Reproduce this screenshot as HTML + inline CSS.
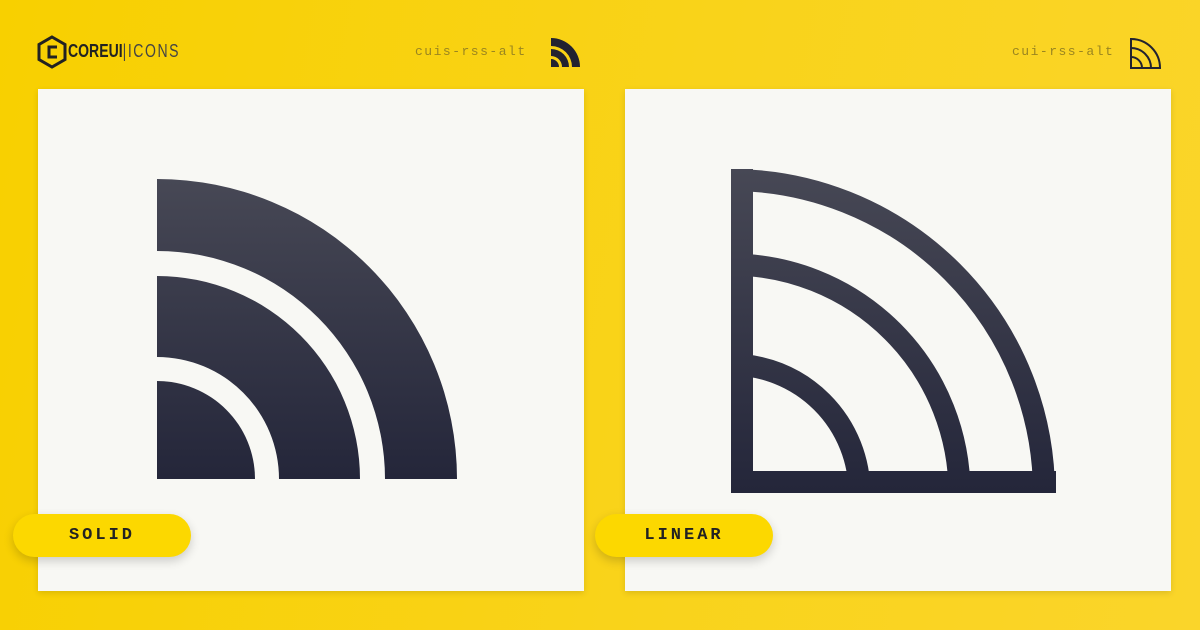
<!DOCTYPE html>
<html><head><meta charset="utf-8"><style>
body{margin:0;width:1200px;height:630px;overflow:hidden;background:linear-gradient(100deg,#f8d000 0%,#f9d31a 55%,#fad52a 100%);font-family:"Liberation Sans",sans-serif;position:relative}
.card{position:absolute;top:89px;width:546px;height:502px;background:#f8f8f4;box-shadow:0 2px 6px rgba(0,0,0,.12)}
.pill{position:absolute;top:514px;width:178px;height:43px;border-radius:22px;background:#fcd800;box-shadow:0 4px 10px rgba(0,0,0,.18);font-family:"Liberation Mono",monospace;font-weight:bold;font-size:17px;letter-spacing:3px;color:#222;display:flex;align-items:center;justify-content:center}
.lbl{position:absolute;top:44px;font-family:"Liberation Mono",monospace;font-size:13px;letter-spacing:1.5px;color:#9a8520}
svg{position:absolute;left:0;top:0}
</style></head><body>
<div class="card" style="left:38px"></div>
<div class="card" style="left:625px"></div>
<div class="lbl" style="left:415px">cuis-rss-alt</div>
<div class="lbl" style="left:1012px">cui-rss-alt</div>
<div style="position:absolute;left:68px;top:41px;font-size:18px;font-weight:bold;color:#222;transform:scaleX(0.78);transform-origin:0 0;white-space:nowrap">COREUI<span style="font-weight:normal;color:#444;letter-spacing:2px">|ICONS</span></div>
<svg width="1200" height="630">
<defs>
<linearGradient id="g" gradientUnits="userSpaceOnUse" x1="0" y1="179" x2="0" y2="479"><stop offset="0" stop-color="#474855"/><stop offset="1" stop-color="#24263a"/></linearGradient>
<linearGradient id="g2" gradientUnits="userSpaceOnUse" x1="0" y1="169" x2="0" y2="493"><stop offset="0" stop-color="#474855"/><stop offset="1" stop-color="#24263a"/></linearGradient>
</defs>
<polygon points="52,37 65,44.5 65,59.5 52,67 39,59.5 39,44.5" fill="none" stroke="#222" stroke-width="3"/>
<path d="M57,47 h-8 v10 h8" fill="none" stroke="#222" stroke-width="3"/>
<g fill="url(#g)">
<path d="M157,479 V381 A98,98 0 0 1 255,479 Z"/>
<path d="M157,357 V276 A203,203 0 0 1 360,479 H279 A122,122 0 0 0 157,357 Z"/>
<path d="M157,251 V179 A300,300 0 0 1 457,479 H385 A228,228 0 0 0 157,251 Z"/>
</g>
<g fill="none" stroke="url(#g2)" stroke-width="22">
<path d="M742,169 V493 M731,482 H1056"/>
<path d="M731,180 A313,313 0 0 1 1044,493"/>
<path d="M731,264.5 A228.5,228.5 0 0 1 959.5,493"/>
<path d="M731,364.5 A128.5,128.5 0 0 1 859.5,493"/>
</g>
<g fill="#222230">
<path d="M551,67 V59 A8,8 0 0 1 559,67 Z"/>
<path d="M551,56 V49 A18,18 0 0 1 569,67 H562 A11,11 0 0 0 551,56 Z"/>
<path d="M551,46 V38 A29,29 0 0 1 580,67 H572 A21,21 0 0 0 551,46 Z"/>
</g>
<g fill="none" stroke="#222230" stroke-width="2">
<path d="M1131,38 V68 H1161"/>
<path d="M1131,39 A29,29 0 0 1 1160,68"/>
<path d="M1131,48 A20,20 0 0 1 1151,68"/>
<path d="M1131,57 A11,11 0 0 1 1142,68"/>
</g>
</svg>
<div class="pill" style="left:13px">SOLID</div>
<div class="pill" style="left:595px">LINEAR</div>
</body></html>
